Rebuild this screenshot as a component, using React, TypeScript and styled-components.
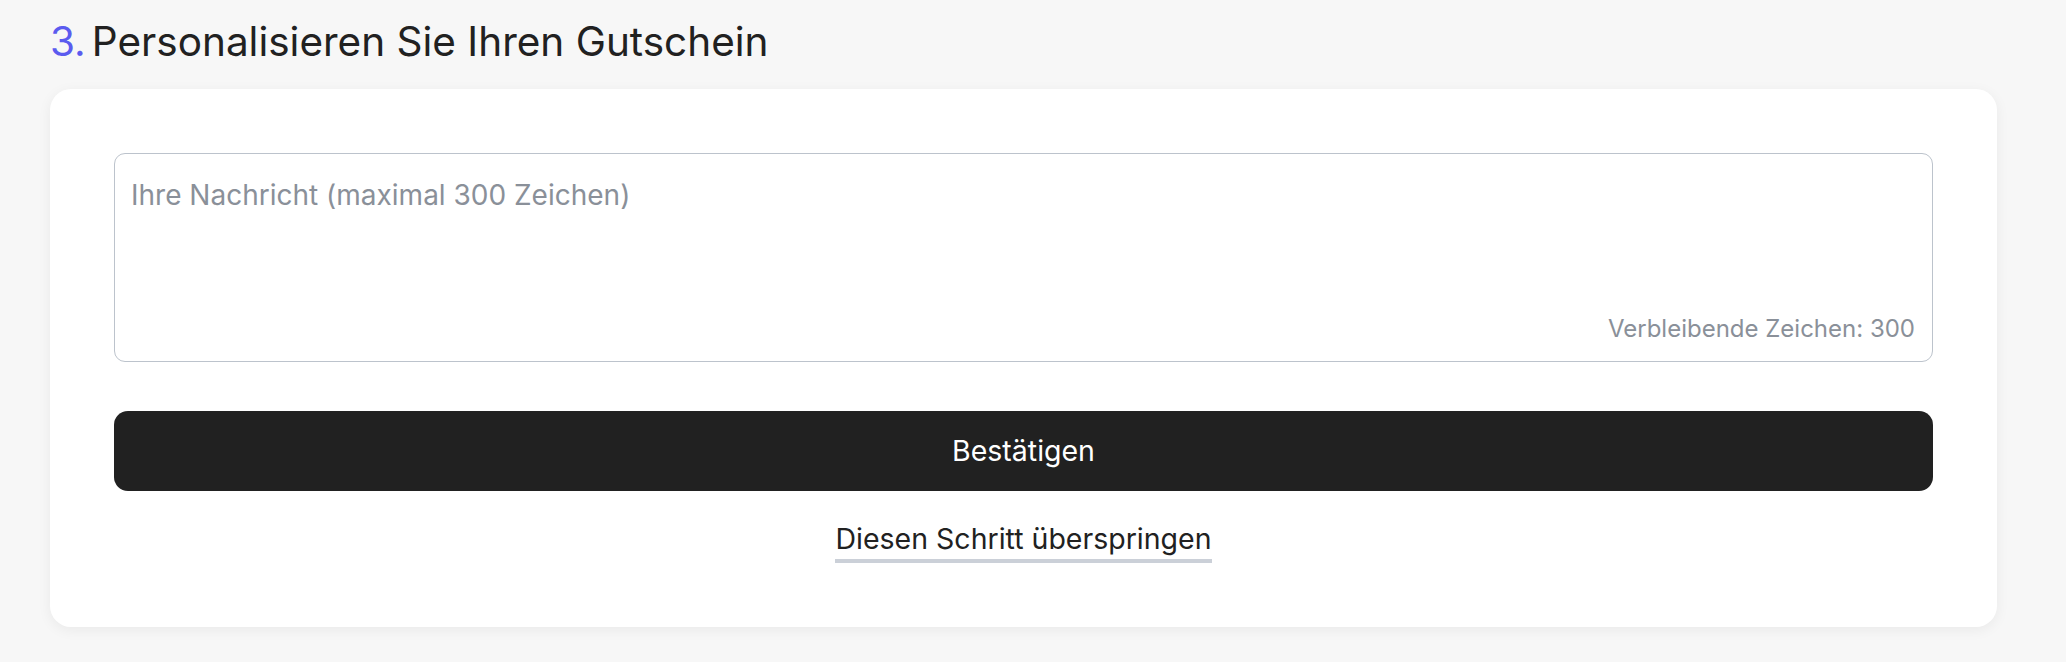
import React, { FunctionComponent, useState } from 'react'
import styled, { createGlobalStyle } from 'styled-components'

const maxChars = 300

const GlobalStyle = createGlobalStyle`
  html, body {
    margin: 0;
    padding: 0;
    background: #f7f7f7;
    font-family: Inter, "Noto Sans", "Liberation Sans", sans-serif;
    color: #212121;
  }
  * {
    box-sizing: border-box;
  }
`

const Page = styled.div`
  padding: 18px 69px 32px 50px;
`

const Title = styled.h2`
  font-size: 40.5px;
  line-height: 48px;
  font-weight: 400;
  margin: 0 0 23px;
  color: #212121;
`

const Step = styled.span`
  color: #5b5bef;
  margin-right: 6px;
`

const Card = styled.section`
  background: #ffffff;
  border-radius: 21px;
  padding: 64px;
  box-shadow: 0 3px 14px rgba(0, 0, 0, 0.06);
  display: flex;
  flex-direction: column;
  align-items: center;
`

const Field = styled.div`
  position: relative;
  width: 100%;
`

const Message = styled.textarea`
  display: block;
  width: 100%;
  height: 209px;
  resize: none;
  border: 1.5px solid #bcc3cc;
  border-radius: 11px;
  padding: 21px 16px;
  font-family: inherit;
  font-size: 28px;
  line-height: 40px;
  color: #212121;
  background: #ffffff;
  outline: none;
  &::placeholder {
    color: #8a9099;
  }
`

const Counter = styled.span`
  position: absolute;
  right: 18px;
  bottom: 17px;
  font-size: 24px;
  line-height: 32px;
  color: #8a9099;
`

const Confirm = styled.button`
  width: 100%;
  height: 80px;
  margin-top: 49px;
  border: none;
  border-radius: 14px;
  background: #212121;
  color: #ffffff;
  font-family: inherit;
  font-size: 28.5px;
  line-height: 40px;
  font-weight: 400;
  cursor: pointer;
`

const Skip = styled.button`
  margin-top: 28px;
  padding: 0;
  border: none;
  border-bottom: 4px solid #cbd0d8;
  background: none;
  color: #212121;
  font-family: inherit;
  font-size: 28.5px;
  line-height: 40px;
  font-weight: 400;
  cursor: pointer;
`

const App: FunctionComponent = () => {
  const [text, setText] = useState('')

  return (
    <Page>
      <GlobalStyle />
      <Title>
        <Step>3.</Step>Personalisieren Sie Ihren Gutschein
      </Title>
      <Card>
        <Field>
          <Message
            value={text}
            maxLength={maxChars}
            placeholder={`Ihre Nachricht (maximal ${maxChars} Zeichen)`}
            onChange={e => setText(e.target.value)}
          />
          <Counter>Verbleibende Zeichen: {maxChars - text.length}</Counter>
        </Field>
        <Confirm>Bestätigen</Confirm>
        <Skip>Diesen Schritt überspringen</Skip>
      </Card>
    </Page>
  )
}

export default App
